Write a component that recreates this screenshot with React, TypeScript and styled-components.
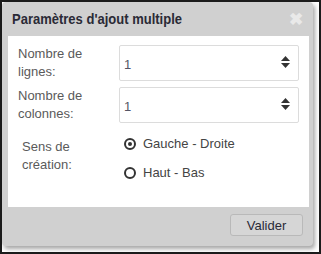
import React, { useState } from 'react';
import styled, { createGlobalStyle } from 'styled-components';

const GlobalStyle = createGlobalStyle`
  html, body {
    margin: 0;
    padding: 0;
    background: #ffffff;
  }
  body {
    font-family: 'Liberation Sans', Arial, sans-serif;
  }
`;

const Frame = styled.div`
  box-sizing: border-box;
  width: 321px;
  height: 254px;
  border: 2px solid #1c1c1c;
  background: #ffffff;
`;

const Dialog = styled.div`
  width: 311px;
  height: 244px;
  background: #d0d0d0;
  border-radius: 4px;
  box-shadow: 2px 3px 4px rgba(0, 0, 0, 0.35);
  display: flex;
  flex-direction: column;
`;

const TitleBar = styled.div`
  height: 34px;
  display: flex;
  align-items: center;
  justify-content: space-between;
  padding: 0 10px 0 10px;
  h3 {
    margin: 0;
    font-size: 13px;
    font-weight: 700;
    color: #2a2a36;
    transform: scaleY(1.08);
  }
`;

const Close = styled.span`
  font-size: 17px;
  font-weight: 700;
  color: #e9e9e9;
  line-height: 1;
  margin-top: 1px;
`;

const Panel = styled.div`
  margin: 0 4px 0 6px;
  height: 171px;
  background: #ffffff;
  box-sizing: border-box;
  padding: 9px 10px 0 10px;
  display: grid;
  grid-template-columns: 101px 180px;
  grid-auto-rows: 36px;
  row-gap: 6px;
`;

const Label = styled.label<{ $indent?: number }>`
  font-size: 13px;
  line-height: 18px;
  color: #5a5a5a;
  padding-left: ${(p) => p.$indent ?? 0}px;
  align-self: ${(p) => (p.$indent ? 'start' : 'center')};
  padding-top: ${(p) => (p.$indent ? 9 : 0)}px;
`;

const NumberBox = styled.div`
  box-sizing: border-box;
  border: 1px solid #dcdcdc;
  border-radius: 2px;
  display: flex;
  align-items: center;
  justify-content: space-between;
  padding: 2px 8px 0 4px;
  font-size: 13px;
  color: #555566;
`;

const Spinner = styled.svg`
  width: 9px;
  height: 12px;
  margin-top: -4px;
`;

const RadioGroup = styled.div`
  display: flex;
  flex-direction: column;
  gap: 12px;
  padding: 6px 0 0 5px;
`;

const RadioRow = styled.div`
  display: flex;
  align-items: center;
  gap: 7px;
  font-size: 13px;
  color: #444444;
  line-height: 17px;
  cursor: pointer;
`;

const RadioMark = styled.span<{ $checked: boolean }>`
  box-sizing: border-box;
  width: 12px;
  height: 12px;
  border: 2px solid #333333;
  border-radius: 50%;
  display: flex;
  align-items: center;
  justify-content: center;
  &::after {
    content: '';
    width: 4px;
    height: 4px;
    border-radius: 50%;
    background: ${(p) => (p.$checked ? '#333333' : 'transparent')};
  }
`;

const Footer = styled.div`
  flex: 1;
  display: flex;
  justify-content: flex-end;
  align-items: flex-start;
  padding: 7px 10px 0 0;
`;

const Button = styled.button`
  width: 73px;
  height: 22px;
  border: 1px solid #b9b9b9;
  border-radius: 3px;
  background: #d6d6d6;
  font-family: 'Liberation Sans', Arial, sans-serif;
  font-size: 13px;
  color: #2a2a36;
  padding: 0;
`;

const SpinIcon = () => (
  <Spinner viewBox="0 0 9 12">
    <path d="M4.5 0 L9 5 H0 Z" fill="#333" />
    <path d="M0 7 H9 L4.5 12 Z" fill="#333" />
  </Spinner>
);

const options = ['Gauche - Droite', 'Haut - Bas'];

export default function App() {
  const [sens, setSens] = useState(0);
  return (
    <>
      <GlobalStyle />
      <Frame>
        <Dialog>
          <TitleBar>
            <h3>Paramètres d'ajout multiple</h3>
            <Close>✖</Close>
          </TitleBar>
          <Panel>
            <Label>
              Nombre de
              <br />
              lignes:
            </Label>
            <NumberBox>
              1
              <SpinIcon />
            </NumberBox>
            <Label>
              Nombre de
              <br />
              colonnes:
            </Label>
            <NumberBox>
              1
              <SpinIcon />
            </NumberBox>
            <Label $indent={4}>
              Sens de
              <br />
              création:
            </Label>
            <RadioGroup>
              {options.map((o, i) => (
                <RadioRow key={o} onClick={() => setSens(i)}>
                  <RadioMark $checked={sens === i} />
                  {o}
                </RadioRow>
              ))}
            </RadioGroup>
          </Panel>
          <Footer>
            <Button>Valider</Button>
          </Footer>
        </Dialog>
      </Frame>
    </>
  );
}
